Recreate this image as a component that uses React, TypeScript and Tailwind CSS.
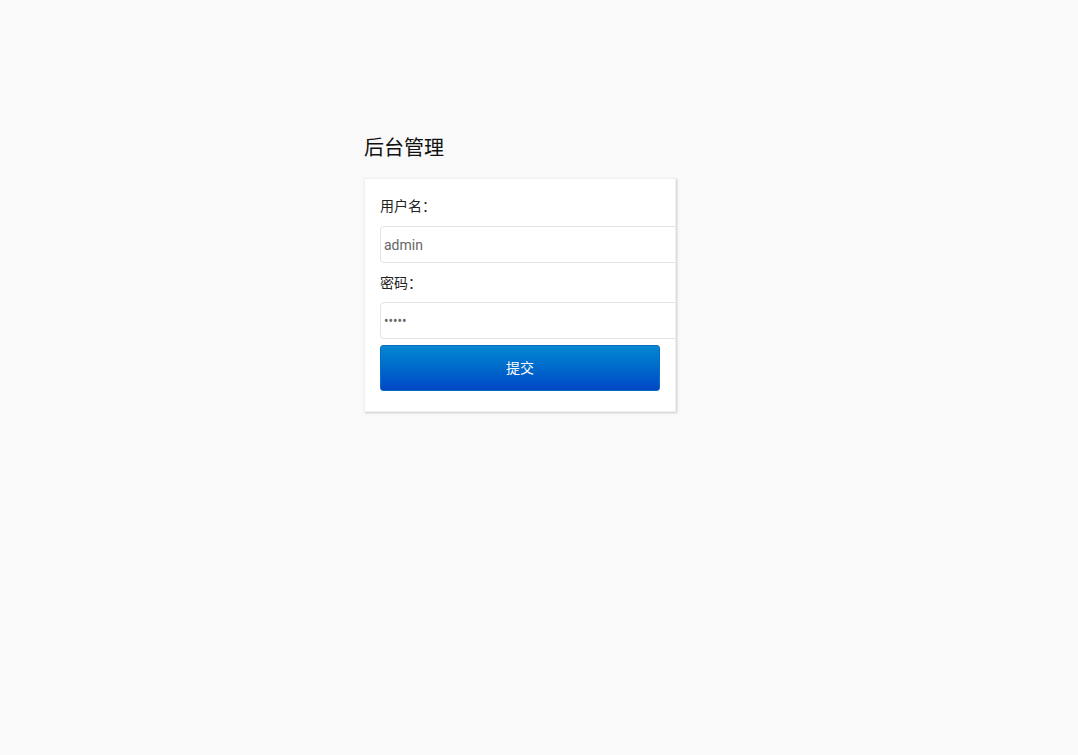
import React from "react";

export default function App() {
  return (
    <div
      className="min-h-[755px] w-full bg-[#f9f9f9]"
      style={{ fontFamily: '"Noto Sans", "Noto Sans CJK SC", sans-serif' }}
    >
      <div className="ml-[364px] pt-[134px] w-[312px]">
        <h1 className="text-[20px] leading-[28px] font-normal text-[#111]">后台管理</h1>
        <div className="mt-[16px] bg-white overflow-hidden shadow-[1px_1px_2px_rgba(0,0,0,0.18)] border border-[#f0f0f0] px-[15px] pt-[17px] pb-[20px]">
          <div className="text-[14px] leading-[20px] text-[#222]">用户名：</div>
          <input
            readOnly
            value="admin"
            className="mt-[10px] block w-[calc(100%+24px)] h-[37px] rounded-[4px] border border-[#e3e3e3] px-[3px] text-[14px] text-[#666] outline-none"
            style={{ fontFamily: 'Roboto, "Noto Sans", sans-serif' }}
          />
          <div className="mt-[10px] text-[14px] leading-[20px] text-[#222]">密码：</div>
          <input
            readOnly
            type="password"
            value="admin"
            className="mt-[9px] block w-[calc(100%+24px)] h-[37px] rounded-[4px] border border-[#e3e3e3] px-[3px] text-[12px] text-[#666] outline-none"
          />
          <button className="mt-[6px] block w-[280px] h-[46px] pb-[2px] rounded-[3px] bg-gradient-to-b from-[#0a88d0] to-[#0046c6] text-white text-[14px] border border-[#0a6cc0]">
            提交
          </button>
        </div>
      </div>
    </div>
  );
}
